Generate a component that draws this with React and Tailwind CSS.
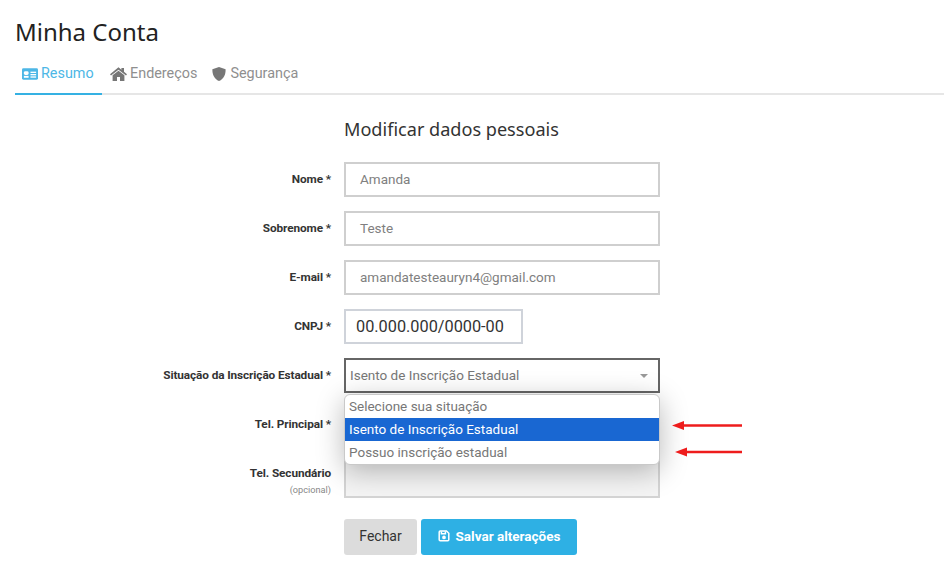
import React from "react";

function Row({ label, sub, mt, children, h = "h-[35px]" }) {
  return (
    <div className={`flex ${h} ${mt}`}>
      <div className="w-[331px] shrink-0 text-right pt-[9px] leading-[16px]">
        <div className="text-[11.8px] font-bold text-[#333] tracking-[-0.1px]">{label}</div>
        {sub && <div className="text-[9.2px] text-[#888] mt-[3px] leading-[12px]">{sub}</div>}
      </div>
      <div className="ml-[13px] relative">{children}</div>
    </div>
  );
}

function Field({ value }) {
  return (
    <div className="w-[316px] h-[35px] border-2 border-[#cfcfcf] bg-white pl-[14px] text-[13.5px] leading-[30px] text-[#808080]">
      {value}
    </div>
  );
}

export default function App() {
  return (
    <div className="relative w-[944px] h-[569px] bg-white overflow-hidden font-['Roboto',sans-serif]">
      <div className="pl-[15px] pt-[16px]">
        <h1 className="font-['Noto_Sans',sans-serif] text-[24px] leading-[32px] text-[#222]">Minha Conta</h1>
      </div>
      <div className="flex h-[47px] ml-[15px] border-b-2 border-[#e6e6e6]">
        <div className="w-[87px] h-[47px] border-b-2 border-[#35b1e3] flex items-center gap-[3px] pl-[7px] pt-[6px] text-[14.4px] text-[#4db7e6]">
          <svg width="16" height="12" viewBox="0 0 17 12" className="shrink-0">
            <rect width="17" height="12" rx="1.5" fill="#4db7e6" />
            <rect x="2" y="3" width="5" height="4" rx="1.5" fill="#fff" />
            <rect x="2" y="8" width="5" height="2" fill="#fff" />
            <rect x="9" y="3.5" width="6" height="1.4" fill="#fff" />
            <rect x="9" y="6" width="6" height="1.4" fill="#fff" />
            <rect x="9" y="8.5" width="6" height="1.4" fill="#fff" />
          </svg>
          <span>Resumo</span>
        </div>
        <div className="flex items-center gap-[3px] ml-[8px] pt-[6px] text-[14.4px] text-[#8f8f8f]">
          <svg width="17" height="14" viewBox="0 0 17 14" className="shrink-0">
            <path d="M8.5 0.3 L0 7.2 L1 8.4 L8.5 2.8 L16 8.4 L17 7.2 L14 4.8 V1 H11.4 V2.8 Z M8.5 3.8 L2.6 8.3 V14 H7 V10 H10 V14 H14.4 V8.3 Z" fill="#777" />
          </svg>
          <span>Endereços</span>
        </div>
        <div className="flex items-center gap-[4px] ml-[15px] pt-[6px] text-[14.4px] text-[#8f8f8f]">
          <svg width="14" height="14" viewBox="0 0 14 14" className="shrink-0">
            <path d="M7 0 L13.6 2.2 C13.8 7.5 11.8 11.8 7 14 C2.2 11.8 0.2 7.5 0.4 2.2 Z" fill="#777" />
          </svg>
          <span>Segurança</span>
        </div>
      </div>

      <div className="ml-[344px] mt-[22px] font-['Noto_Sans',sans-serif] text-[18.1px] leading-[24px] text-[#333]">
        Modificar dados pessoais
      </div>

      <Row label="Nome *" mt="mt-[21px]"><Field value="Amanda" /></Row>
      <Row label="Sobrenome *" mt="mt-[14px]"><Field value="Teste" /></Row>
      <Row label="E-mail *" mt="mt-[14px]"><Field value="amandatesteauryn4@gmail.com" /></Row>
      <Row label="CNPJ *" mt="mt-[14px]">
        <div className="w-[179px] h-[35px] border-2 border-[#cfd3da] bg-white pl-[10px] text-[16.3px] leading-[32px] text-[#333]">
          00.000.000/0000-00
        </div>
      </Row>
      <Row label="Situação da Inscrição Estadual *" mt="mt-[14px]">
        <div className="w-[316px] h-[35px] border-2 border-[#666] bg-white pl-[4px] text-[13.5px] leading-[31px] text-[#777] flex justify-between">
          <span>Isento de Inscrição Estadual</span>
          <span className="w-0 h-0 mt-[14px] mr-[10px] border-x-[4px] border-x-transparent border-t-[4px] border-t-[#999]" />
        </div>
      </Row>
      <Row label="Tel. Principal *" mt="mt-[14px]"><Field value="" /></Row>
      <Row label="Tel. Secundário" sub="(opcional)" mt="mt-[14px]" h="h-[42px]">
        <div className="w-[316px] h-[42px] border-2 border-[#d4d4d4] bg-[#f4f4f4]" />
      </Row>

      <div className="flex gap-[4px] ml-[344px] mt-[21px]">
        <button className="w-[73px] h-[36px] pb-[2px] rounded-[3px] bg-[#dcdcdc] text-[14px] text-[#333]">Fechar</button>
        <button className="w-[156px] h-[36px] pb-[2px] rounded-[3px] bg-[#2eb0e4] text-[13.5px] font-bold text-white flex items-center justify-center gap-[6px]">
          <svg width="12" height="12" viewBox="0 0 12 12" fill="none" stroke="#fff" strokeWidth="1.5">
            <path d="M1.2 2 Q1.2 1 2.2 1 H8.5 L10.8 3.3 V9.8 Q10.8 10.8 9.8 10.8 H2.2 Q1.2 10.8 1.2 9.8 Z" />
            <path d="M3.4 1.4 V3.8 H7.4 V1.4" />
            <circle cx="6" cy="7.4" r="1.1" fill="#fff" />
          </svg>
          <span>Salvar alterações</span>
        </button>
      </div>

      <div className="absolute left-[344px] top-[394px] w-[316px] h-[71px] rounded-[6px] bg-white border border-[#c9c9c9] shadow-[0_6px_28px_rgba(0,0,0,0.28)] overflow-hidden text-[13.5px] leading-[22px] text-[#777]">
        <div className="h-[23px] pl-[4px]">Selecione sua situação</div>
        <div className="h-[23px] pl-[4px] bg-[#1967d2] text-white">Isento de Inscrição Estadual</div>
        <div className="h-[23px] pl-[4px]">Possuo inscrição estadual</div>
      </div>

      <svg className="absolute left-[670px] top-[418px]" width="75" height="40" viewBox="0 0 75 40">
        <path d="M72 7.5 H10" stroke="#ee1c1c" strokeWidth="2.4" />
        <path d="M2 7.5 L14 3 V12 Z" fill="#ee1c1c" />
        <path d="M72 34 H12" stroke="#ee1c1c" strokeWidth="2.4" />
        <path d="M5 34 L17 29.5 V38.5 Z" fill="#ee1c1c" />
      </svg>
    </div>
  );
}
